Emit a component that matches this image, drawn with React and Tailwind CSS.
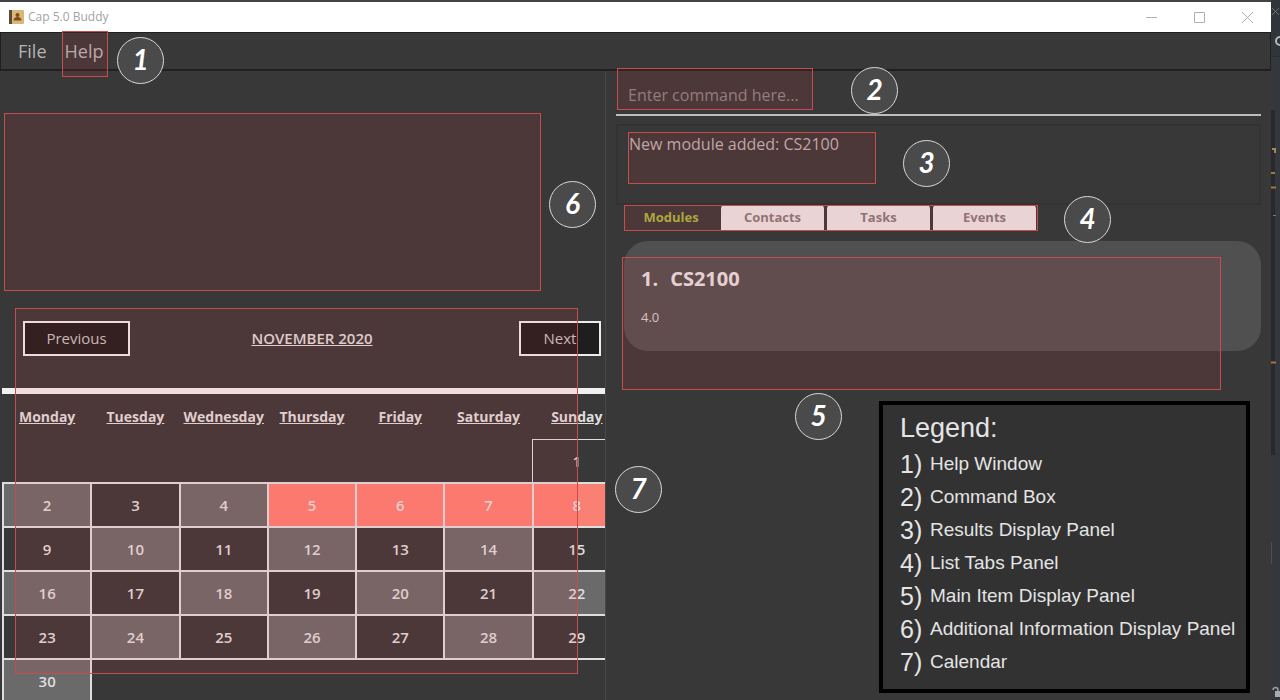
import React from "react";

const days = ["Monday", "Tuesday", "Wednesday", "Thursday", "Friday", "Saturday", "Sunday"];
const weeks = [
  [null, null, null, null, null, null, 1],
  [2, 3, 4, 5, 6, 7, 8],
  [9, 10, 11, 12, 13, 14, 15],
  [16, 17, 18, 19, 20, 21, 22],
  [23, 24, 25, 26, 27, 28, 29],
  [30, null, null, null, null, null, null],
];
const legend = [
  "Help Window",
  "Command Box",
  "Results Display Panel",
  "List Tabs Panel",
  "Main Item Display Panel",
  "Additional Information Display Panel",
  "Calendar",
];

function Highlight({ className }) {
  return (
    <div
      aria-hidden="true"
      className={`pointer-events-none absolute z-10 border border-[#c64d4d] bg-[#ff3c3c]/10 ${className}`}
    />
  );
}

function Badge({ n, className }) {
  return (
    <span
      className={`absolute z-20 flex size-[47px] items-center justify-center rounded-full border border-[#d8d8d8] bg-[#4a4a4a] pb-1 font-['Lato',sans-serif] text-[28px] leading-none font-bold text-white italic ${className}`}
    >
      {n}
    </span>
  );
}

function TitleBar() {
  return (
    <header className="flex h-8 shrink-0 items-center border-t-2 border-[#444444] bg-white px-2 text-[#a3a3a3]">
      <svg className="size-4" viewBox="0 0 16 16" aria-hidden="true">
        <rect x="1" y="1" width="15" height="14" rx="1" fill="#dcb679" />
        <rect x="1" y="1" width="3" height="14" fill="#5a4a3c" />
        <circle cx="9.500" cy="6" r="2" fill="#7a4d1c" />
        <path d="M5.500 11.500c0-2.500 2-3.500 4-3.500s4 1 4 3.500z" fill="#7a4d1c" />
      </svg>
      <h1 className="ml-1 text-[12px]">Cap 5.0 Buddy</h1>
      <div className="ml-auto flex items-center gap-9 pr-[10px]">
        <button aria-label="Minimize" className="size-3">
          <svg viewBox="0 0 12 12" stroke="#b0b0b0" fill="none"><path d="M1 6.500h11" /></svg>
        </button>
        <button aria-label="Maximize" className="size-3">
          <svg viewBox="0 0 12 12" stroke="#b0b0b0" fill="none"><path d="M1.500 1.500h10v10h-10z" /></svg>
        </button>
        <button aria-label="Close" className="size-3">
          <svg viewBox="0 0 12 12" stroke="#b0b0b0" fill="none"><path d="M1 1l11 11M12 1L1 12" /></svg>
        </button>
      </div>
    </header>
  );
}

function MenuBar() {
  return (
    <nav className="relative flex h-[39px] shrink-0 items-center gap-[18px] border border-b-2 border-[#202020] px-[17px] text-[18px] text-[#b5b5b5]">
      <button>File</button>
      <button>Help</button>
      <Highlight className="-top-[2px] left-[61px] h-[46px] w-[46px]" />
      <Badge n={1} className="top-1 left-[116px]" />
    </nav>
  );
}

function dayClass(d) {
  if (d === null) return "";
  if (d === 1) return "border border-[#dedede]";
  if (d >= 5 && d <= 8) return "border-2 border-[#dedede] bg-[#fb8074]";
  return d % 2 === 0 ? "border-2 border-[#dedede] bg-[#6a6a6a]" : "border-2 border-[#dedede]";
}

function Calendar() {
  return (
    <section aria-label="Calendar" className="relative mt-[17px] flex-1 pt-[13px] pl-[2px]">
      <div className="grid grid-cols-[1fr_auto_1fr] items-center pr-1 pl-[21px] text-[15px]">
        <button className="h-[35px] w-[107px] justify-self-start border-2 border-[#ececec] bg-[#1e1e1e] text-[#c4c4c4]">
          Previous
        </button>
        <h2 className="font-semibold text-[#dcdcdc] underline">NOVEMBER 2020</h2>
        <button className="h-[35px] w-[82px] justify-self-end border-2 border-[#ececec] bg-[#1e1e1e] text-[#c4c4c4]">
          Next
        </button>
      </div>
      <hr className="mt-8 border-t-[6px] border-[#f0f0f0]" />
      <table className="w-[calc(100%+17px)] table-fixed border-collapse text-center text-[15px] text-[#dedede]">
        <thead>
          <tr className="h-[45px] text-[14px]">
            {days.map((d) => (
              <th key={d} scope="col" className="p-0 font-bold underline">{d}</th>
            ))}
          </tr>
        </thead>
        <tbody>
          {weeks.map((w, i) => (
            <tr key={i} className="h-11">
              {w.map((d, j) => (
                <td key={j} className={`p-0 font-semibold ${dayClass(d)}`}>{d}</td>
              ))}
            </tr>
          ))}
        </tbody>
      </table>
      <Highlight className="top-0 right-[27px] left-[15px] h-[366px]" />
    </section>
  );
}

function LeftPane() {
  return (
    <div className="relative w-[606px] max-w-[48%] shrink-0">
      <div className="flex h-full flex-col overflow-hidden border-r border-[#484848]">
        <section aria-label="Additional information" className="relative mt-[42px] h-[178px] shrink-0">
          <Highlight className="inset-y-0 right-16 left-1" />
        </section>
        <Calendar />
      </div>
      <Badge n={6} className="top-[110px] right-[10px]" />
    </div>
  );
}

function Tabs() {
  const off = "w-[103px] rounded-t-sm bg-[#e8e5e6] text-[#857a7b]";
  return (
    <div role="tablist" className="relative ml-2 flex h-[26px] w-[414px] gap-[3px] text-[13px] font-bold">
      <button role="tab" aria-selected="true" className="w-[94px] text-[#a3b440]">Modules</button>
      <button role="tab" aria-selected="false" className={off}>Contacts</button>
      <button role="tab" aria-selected="false" className={off}>Tasks</button>
      <button role="tab" aria-selected="false" className={off}>Events</button>
      <Highlight className="inset-0" />
      <Badge n={4} className="-top-[9px] -right-[73px]" />
    </div>
  );
}

function RightPane() {
  return (
    <main className="relative min-w-0 flex-1 pr-[10px] pl-[10px]">
      <div className="relative h-[45px] border-b-2 border-[#bdbdbd]">
        <input
          aria-label="Command"
          placeholder="Enter command here..."
          className="h-full w-full bg-transparent px-3 pt-1 text-[16px] text-[#b8b8b8] outline-none placeholder:text-[#8b8484]"
        />
        <Highlight className="-top-[3px] left-px h-[42px] w-[196px]" />
        <Badge n={2} className="-top-1 left-[235px]" />
      </div>
      <section aria-label="Result" className="relative mt-2 h-[81px] border-2 border-[#333333] px-[11px] py-1">
        <p className="text-[16px] leading-7 text-[#bcb2b2]">New module added: CS2100</p>
        <Highlight className="top-[6px] left-[10px] h-[52px] w-[248px]" />
        <Badge n={3} className="top-[14px] left-[285px]" />
      </section>
      <Tabs />
      <section aria-label="Modules" className="relative mt-[10px] h-[149px] pl-2">
        <article className="h-[110px] rounded-3xl bg-[#505050] px-[17px] pt-6 text-[#d8d0d0]">
          <h3 className="text-[20px] leading-7 font-bold text-[#e6e0e0]"><span className="mr-3">1.</span>CS2100</h3>
          <p className="mt-[14px] text-[13px] leading-5">4.0</p>
        </article>
        <Highlight className="top-4 right-10 bottom-0 left-[6px]" />
      </section>
      <Badge n={5} className="top-[322px] left-[189px]" />
      <Badge n={7} className="top-[395px] left-[9px]" />
    </main>
  );
}

function Legend() {
  return (
    <aside className="absolute right-[30px] bottom-[7px] z-20 h-[292px] w-[371px] border-4 border-black bg-[#323232] px-[17px] py-1 font-['Liberation_Sans',sans-serif] text-[#e4e4e4]">
      <h2 className="text-[27px] leading-[39px]">Legend:</h2>
      <ol>
        {legend.map((t, i) => (
          <li key={t} className="flex h-[33px] items-center">
            <span className="w-[30px] shrink-0 text-[25px]">{i + 1})</span>
            <span className="text-[19px] whitespace-nowrap">{t}</span>
          </li>
        ))}
      </ol>
    </aside>
  );
}

function BackgroundWindowEdge() {
  return (
    <div aria-hidden="true" className="w-[9px] shrink-0 bg-[#34373b]">
      <svg width="9" height="700" viewBox="0 0 9 700" fill="none">
        <rect width="9" height="56" fill="#2f353b" />
        <path d="M0 56.500h9" stroke="#292d31" />
        <rect y="110" width="4" height="345" fill="#27292d" />
        <path d="M1 8l7 7M8 8l-7 7" stroke="#6d7174" />
        <path d="M9 37a4 4 0 0 0 0 8" stroke="#b5b9bb" strokeWidth="2" />
        <path d="M1 149h3v4" stroke="#a08a5c" strokeWidth="2" />
        <path d="M0 173h4M0 187.500h5M0 362.500h5" stroke="#a37b35" strokeWidth="2" />
        <path d="M2 215.500h3" stroke="#777b80" />
        <path d="M0.500 542v22" stroke="#4c4f52" />
        <path d="M2 690a2.500 2.500 0 0 1 5 0v3" stroke="#9c9fa1" strokeWidth="1.500" />
        <rect x="4" y="691" width="5" height="6" fill="#a8abad" />
      </svg>
    </div>
  );
}

export default function App() {
  return (
    <div className="relative flex h-screen overflow-hidden bg-[#383838] font-['Open_Sans','Noto_Sans',sans-serif]">
      <div className="flex min-w-0 flex-1 flex-col">
        <TitleBar />
        <MenuBar />
        <div className="flex min-h-0 flex-1">
          <LeftPane />
          <RightPane />
        </div>
      </div>
      <BackgroundWindowEdge />
      <Legend />
    </div>
  );
}
